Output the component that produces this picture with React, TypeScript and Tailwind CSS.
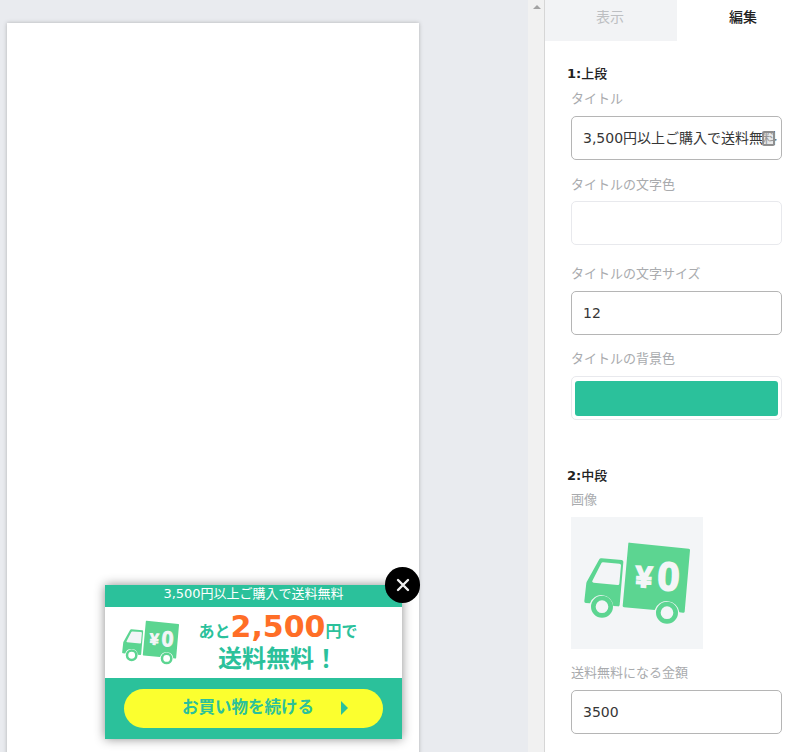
function Truck({ className }: { className?: string }) {
  return (
    <svg viewBox="0 0 396 396" className={className}>
      <path d="M172 79 Q172 76 176 77 L353 95 Q358 96 357 100 L341 284 Q340 288 336 287 L325 286 A38 38 0 0 0 251 279 L159 271 Q155 270 155 267 Z" fill="#5cd591" />
      <path d="M92 124 L152 129 Q158 130 157 135 L146 264 Q145 269 140 268 L127 267 A36 36 0 0 0 57 259 L44 258 Q39 257 40 252 L46 198 Q47 194 49 191 L84 128 Q87 123 92 124 Z" fill="#5cd591" />
      <path d="M96 136 L145 140 Q150 140 150 145 L145 200 Q144 205 140 204 L68 197 Q61 196 65 190 L91 139 Q92 136 96 136 Z" fill="#f3f5f7" />
      <circle cx="93" cy="269" r="26" fill="none" stroke="#5cd591" strokeWidth="14" />
      <circle cx="288" cy="287" r="26" fill="none" stroke="#5cd591" strokeWidth="14" />
      <g transform="rotate(3 258 180)" fill="#f3f5f7" stroke="#f3f5f7" strokeWidth="5" style={{ fontFamily: '"Liberation Sans", sans-serif', fontWeight: 700 }}>
        <text x="219" y="213" fontSize="90" textAnchor="middle">¥</text>
        <text x="293" y="218" fontSize="120" textAnchor="middle">0</text>
      </g>
    </svg>
  );
}

function Label({ children, className }: { children: React.ReactNode; className: string }) {
  return <div className={`ml-[26px] h-[18px] text-[13px] leading-[18px] text-[#a9abae] ${className}`}>{children}</div>;
}

function Field({ value, children }: { value: string; children?: React.ReactNode }) {
  return (
    <div className="relative ml-[26px] mt-[8px] flex h-[44px] w-[211px] items-center overflow-hidden whitespace-nowrap rounded-[5px] border border-[#b5b5b5] bg-white pl-[11px] text-[14px] text-[#363636]">
      {value}
      {children}
    </div>
  );
}

export default function App() {
  return (
    <div
      className="flex h-[752px] w-[795px] overflow-hidden bg-[#e9ebef]"
      style={{ fontFamily: '"DejaVu Sans", "Noto Sans CJK JP", sans-serif' }}
    >
      <div className="w-[528px] shrink-0 pl-[7px] pt-[23px]">
        <div className="relative h-[760px] w-[412px] bg-white shadow-[0_0_4px_rgba(0,0,0,0.25)]">
          <div className="absolute left-[98px] top-[562px] w-[297px] shadow-[0_0_10px_rgba(0,0,0,0.45)]">
            <div className="flex h-[22px] items-center justify-center bg-[#2bc19b] pb-[4px] text-[13px] text-white">
              3,500円以上ご購入で送料無料
            </div>
            <div className="flex h-[71px] bg-white pl-[10px]">
              <Truck className="h-[71px] w-[71px] shrink-0" />
              <div className="flex w-[184px] flex-col items-center font-bold text-[#2bc19b]">
                <div className="mt-[2px] flex h-[36px] items-baseline whitespace-nowrap text-[16px] leading-[36px]">
                  あと<span className="text-[30px] text-[#ff6e27]">2,500</span>円で
                </div>
                <div className="mt-[-2px] whitespace-nowrap text-[24px] leading-[32px]">送料無料！</div>
              </div>
            </div>
            <div className="flex h-[61px] items-center justify-center bg-[#2bc19b]">
              <div className="relative flex h-[39px] w-[259px] items-center rounded-full bg-[#fbff2f] pl-[58px] text-[16.5px] font-bold text-[#2bc19b]">
                お買い物を続ける
                <span className="absolute left-[217px] top-[12px] h-0 w-0 border-y-[7px] border-l-[7px] border-y-transparent border-l-[#2bc19b]" />
              </div>
            </div>
          </div>
          <div className="absolute left-[378px] top-[544px] flex h-[36px] w-[35px] items-center justify-center rounded-full bg-black">
            <svg viewBox="0 0 16 16" className="h-[16px] w-[16px]" stroke="#f0f0f0" strokeWidth="2.4" strokeLinecap="round">
              <path d="M3 3 L13 13 M13 3 L3 13" />
            </svg>
          </div>
        </div>
      </div>

      <div className="relative w-[17px] shrink-0 border-r border-[#d6d6d6] bg-[#f1f1f1]">
        <span className="absolute left-[5px] top-[5px] h-0 w-0 border-x-[4px] border-b-[4px] border-x-transparent border-b-[#a3a3a3]" />
      </div>

      <div className="h-[752px] w-[250px] shrink-0 bg-white">
        <div className="flex h-[41px] text-[14px]">
          <div className="flex w-[132px] items-center justify-center bg-[#f2f3f5] pb-[6px] pr-[2px] text-[#bdbfc2]">表示</div>
          <div className="flex w-[118px] items-center justify-center pb-[6px] pl-[14px] font-medium text-[#222222]">編集</div>
        </div>

        <div className="ml-[22px] mt-[24px] h-[18px] text-[13px] font-medium leading-[18px] text-[#222222]"><span className="font-bold">1:</span>上段</div>
        <Label className="mt-[7px]">タイトル</Label>
        <Field value="3,500円以上ご購入で送料無料">
          <span className="absolute right-[6px] top-[14px] h-[15px] w-[13px] rounded-[2px] border-2 border-[#8f8f8f] bg-[#d9d9d9]/60" />
        </Field>

        <Label className="mt-[16px]">タイトルの文字色</Label>
        <div className="ml-[26px] mt-[7px] h-[44px] w-[211px] rounded-[5px] border border-[#e8e9ed] bg-white" />

        <Label className="mt-[20px]">タイトルの文字サイズ</Label>
        <Field value="12" />

        <Label className="mt-[15px]">タイトルの背景色</Label>
        <div className="ml-[26px] mt-[8px] h-[44px] w-[211px] rounded-[5px] border border-[#e8e9ed] bg-white px-[3px] pt-[4px]">
          <div className="h-[35px] rounded-[3px] bg-[#2bc19b]" />
        </div>

        <div className="ml-[22px] mt-[47px] h-[18px] text-[13px] font-medium leading-[18px] text-[#222222]"><span className="font-bold">2:</span>中段</div>
        <Label className="mt-[6px]">画像</Label>
        <div className="ml-[26px] mt-[8px] h-[132px] w-[132px] bg-[#f3f5f7]">
          <Truck className="h-[132px] w-[132px]" />
        </div>

        <Label className="mt-[15px]">送料無料になる金額</Label>
        <Field value="3500" />
      </div>
    </div>
  );
}
